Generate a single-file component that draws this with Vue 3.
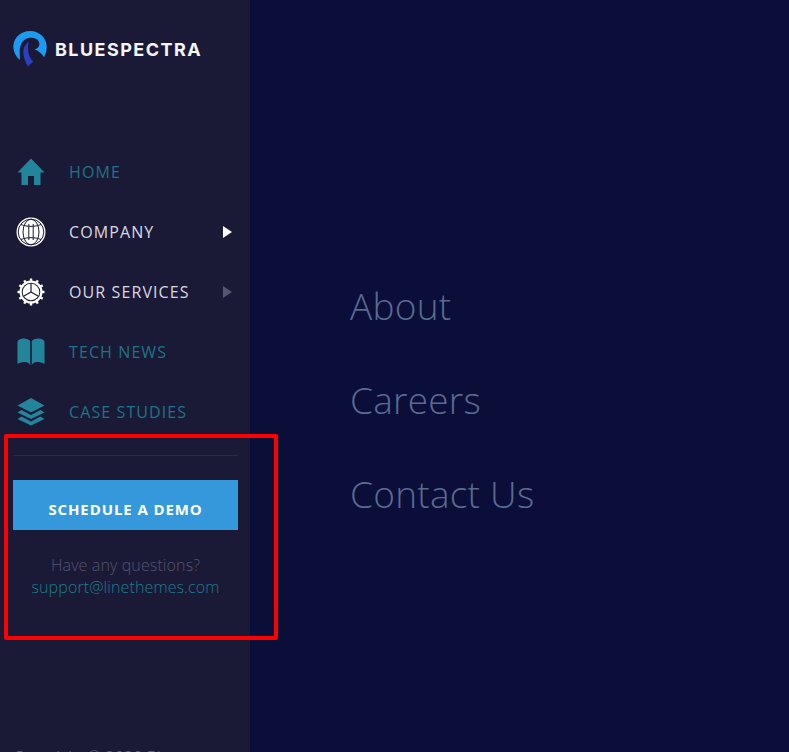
<template>
  <div class="page">
    <aside class="sidebar">
      <a class="logo">
        <svg class="logo-mark" width="36" height="36" viewBox="0 0 36 36">
          <path
            fill="#1e9bf0"
            d="M7 29C2.500 25.500 .3 20 .3 15C.8 6.500 8 0 17 0C26.500 0 33.700 7 33.700 15.700C33.700 19.500 32.800 23 31 26.300C29 23 26 20 21.500 18.300C25 17.500 26.800 15 26.300 12.500C25.800 10 24.800 9 23.800 8.300C21.500 7 18.500 6.500 15.500 7C12.300 7.800 9.800 9.800 8.500 12.500C7.200 15 6.600 18 6.700 20.700C6.800 24 6.900 26.500 7 29Z"
          />
          <path
            fill="#2a3fc4"
            d="M15.800 10.500C12 13.500 10.300 17 10.300 20.700C10.300 26 12.500 31.500 15.300 35.700C16.500 33.500 18.300 32 20.300 30.700C17.800 28 15.800 25 15.300 20.700C14.900 17 15 14 15.800 10.500Z"
          />
        </svg>
        <span class="logo-text">BLUESPECTRA</span>
      </a>

      <nav class="nav">
        <a
          v-for="item in navItems"
          :key="item.label"
          class="nav-item"
          :class="{ light: item.light }"
        >
          <span class="nav-icon">
            <svg v-if="item.icon === 'home'" width="28" height="28" viewBox="0 0 28 28">
              <path fill="#22859b" d="M14 .5L.5 14.500H4.500V27H11V18H17V27H23.500V14.500H27.500Z" />
            </svg>
            <svg v-else-if="item.icon === 'globe'" width="30" height="30" viewBox="0 0 30 30">
              <circle cx="15" cy="15" r="14.500" fill="#fff" />
              <g fill="none" stroke="#1a1a36" stroke-width="1">
                <circle cx="15" cy="15" r="12.800" />
                <ellipse cx="15" cy="15" rx="8" ry="12.800" />
                <path d="M12.800 7V23M17.200 7V23M5 7.500C11 10 19 10 25 7.500M5 22.500C11 20 19 20 25 22.500" />
              </g>
            </svg>
            <svg v-else-if="item.icon === 'gear'" width="28" height="28" viewBox="0 0 28 28">
              <circle cx="14" cy="14" r="11.500" fill="#fff" />
              <g fill="#fff">
                <rect
                  v-for="a in gearTeeth"
                  :key="a"
                  x="12.800"
                  y="0.500"
                  width="2.400"
                  height="4"
                  :transform="`rotate(${a} 14 14)`"
                />
              </g>
              <circle cx="14" cy="14" r="9.300" fill="#1a1a36" />
              <circle cx="14" cy="14" r="8.300" fill="#fff" />
              <path
                fill="none"
                stroke="#1a1a36"
                stroke-width="1.200"
                d="M14 14V6M14 14L21 18M14 14L7 18"
              />
            </svg>
            <svg v-else-if="item.icon === 'book'" width="28" height="28" viewBox="0 0 28 28">
              <path
                fill="#22859b"
                d="M.5 4C.5 2 4 .5 7 .5C9.500 .5 12 1.500 13.200 3V27C12 25 10.500 24 8.500 24C5 24 3 24.500 .5 26ZM27.500 4C27.500 2 24 .5 21 .5C18.500 .5 16 1.500 14.800 3V27C16 25 17.500 24 19.500 24C23 24 25 24.500 27.500 26Z"
              />
            </svg>
            <svg v-else width="28" height="28" viewBox="0 0 28 28">
              <path fill="#22859b" d="M14 0L27.500 7.500L14 14.500L.5 7.500Z" />
              <path fill="#22859b" d="M4.500 12L14 17L23.500 12L27.500 14.500L14 21L.5 14.500Z" />
              <path fill="#22859b" d="M4.500 18.500L14 23.500L23.500 18.500L27.500 21L14 27.500L.5 21Z" />
            </svg>
          </span>
          <span class="nav-label">{{ item.label }}</span>
          <span v-if="item.arrow" class="nav-arrow" :class="item.arrow"></span>
        </a>
      </nav>

      <div class="cta">
        <a class="demo-btn">SCHEDULE A DEMO</a>
        <p class="help">
          Have any questions?<br />
          <a class="help-mail">support@linethemes.com</a>
        </p>
      </div>

      <div class="copyright">Copyright © 2020 Bluespectra</div>
    </aside>

    <main class="main">
      <a v-for="link in subLinks" :key="link" class="sub-link">{{ link }}</a>
    </main>

    <div class="highlight"></div>
  </div>
</template>

<script setup>
const navItems = [
  { label: "HOME", icon: "home" },
  { label: "COMPANY", icon: "globe", light: true, arrow: "on" },
  { label: "OUR SERVICES", icon: "gear", light: true, arrow: "off" },
  { label: "TECH NEWS", icon: "book" },
  { label: "CASE STUDIES", icon: "layers" },
];

const subLinks = ["About", "Careers", "Contact Us"];

const gearTeeth = [0, 30, 60, 90, 120, 150, 180, 210, 240, 270, 300, 330];
</script>

<style>
html,
body {
  margin: 0;
  overflow: hidden;
}
</style>

<style scoped>
.page {
  position: relative;
  display: flex;
  height: 752px;
  overflow: hidden;
  background: #0b0e38;
  font-family: "Open Sans", sans-serif;
}

.sidebar {
  width: 250px;
  flex-shrink: 0;
  box-sizing: border-box;
  padding: 31px 12px 0 13px;
  background: #1a1a36;
}

.logo {
  display: flex;
  align-items: center;
  gap: 6px;
  height: 36px;
}

.logo-text {
  font-family: "Inter", sans-serif;
  font-size: 18px;
  font-weight: 700;
  color: #f4f5f8;
  letter-spacing: 1.45px;
}

.nav {
  margin-top: 75px;
}

.nav-item {
  display: flex;
  align-items: center;
  height: 60px;
  color: #1e7388;
}

.nav-item.light {
  color: #d9d9e2;
}

.nav-icon {
  width: 36px;
  margin-right: 20px;
  display: flex;
  justify-content: center;
}

.nav-label {
  flex: 1;
  font-size: 16px;
  letter-spacing: 1.1px;
}

.nav-arrow {
  width: 0;
  height: 0;
  margin-right: 6px;
  border-left: 9px solid #fff;
  border-top: 6px solid transparent;
  border-bottom: 6px solid transparent;
}

.nav-arrow.off {
  border-left-color: #56566e;
}

.cta {
  margin-top: 13px;
  padding-top: 24px;
  border-top: 1px solid #2a2a45;
  text-align: center;
}

.demo-btn {
  display: block;
  height: 50px;
  line-height: 58px;
  background: #3498db;
  color: #fff;
  font-size: 15px;
  font-weight: 700;
  letter-spacing: 0.9px;
}

.help {
  margin: 24px 0 0;
  font-size: 16px;
  font-weight: 300;
  line-height: 22px;
  letter-spacing: 0.12px;
  color: #52546f;
}

.help-mail {
  color: #1f7a8e;
}

.copyright {
  margin-top: 148px;
  font-size: 16.300px;
  font-weight: 300;
  color: #6a6c85;
  white-space: nowrap;
}

.main {
  flex: 1;
  display: flex;
  flex-direction: column;
  gap: 45px;
  padding: 281px 0 0 100px;
}

.sub-link {
  font-size: 37px;
  font-weight: 300;
  line-height: 49px;
  letter-spacing: 0.25px;
  color: #5a6b92;
}

.highlight {
  position: absolute;
  left: 4px;
  top: 434px;
  width: 266px;
  height: 198px;
  border: 4px solid #f00;
  border-radius: 2px;
}
</style>
